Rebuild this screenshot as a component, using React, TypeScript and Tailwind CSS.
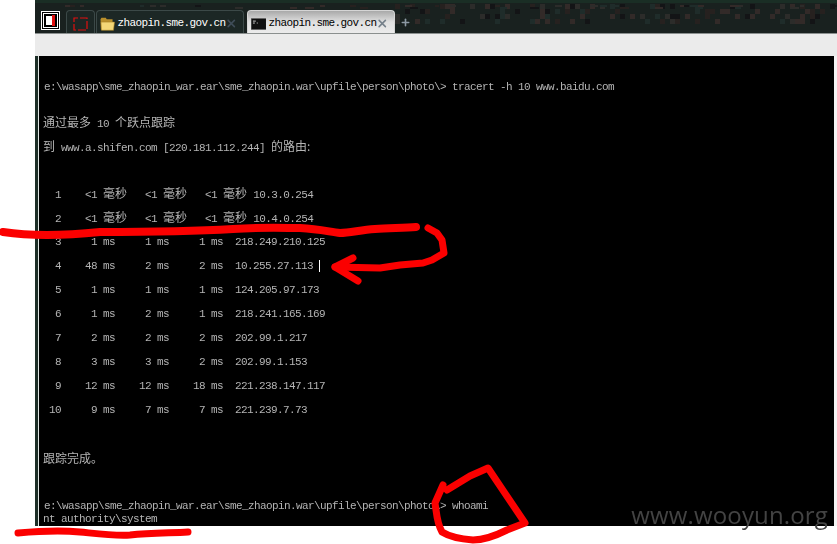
import React from 'react';
import { X, Plus } from 'lucide-react';

const mono = "font-['Liberation_Mono','Noto_Sans_CJK_SC',monospace]";

// speckles in the title bar wallpaper
const speckles = (() => {
  const out: { x: number; y: number; w: number; h: number; c: string }[] = [];
  let seed = 7;
  const rnd = () => {
    seed = (seed * 16807) % 2147483647;
    return seed / 2147483647;
  };
  const colors = ['#26211f', '#2c2c2a', '#131416', '#322a28', '#1f2c2a'];
  for (let i = 0; i < 120; i++) {
    const x = 395 + Math.floor(rnd() * 88) * 5;
    const y = 4 + Math.floor(rnd() * 4) * 5;
    out.push({ x, y, w: 5, h: 5, c: colors[Math.floor(rnd() * 5)] });
  }
  for (let i = 0; i < 40; i++) {
    const x = 40 + Math.floor(rnd() * 160) * 5;
    out.push({ x, y: 5 + Math.floor(rnd() * 2) * 2, w: 4 + Math.floor(rnd() * 6), h: 2, c: colors[Math.floor(rnd() * 5)] });
  }
  return out;
})();

const Zh: React.FC<{ children: React.ReactNode }> = ({ children }) => (
  <span className="text-[12px] tracking-normal font-['Noto_Sans_CJK_SC',sans-serif]">{children}</span>
);

const ms = <Zh>毫秒</Zh>;

const zhHops = [
  ['  1', '10.3.0.254'],
  ['  2', '10.4.0.254'],
];

const hops = [
  '  3     1 ms     1 ms     1 ms  218.249.210.125',
  '  4    48 ms     2 ms     2 ms  10.255.27.113 ',
  '  5     1 ms     1 ms     1 ms  124.205.97.173',
  '  6     1 ms     2 ms     1 ms  218.241.165.169',
  '  7     2 ms     2 ms     2 ms  202.99.1.217',
  '  8     3 ms     3 ms     2 ms  202.99.1.153',
  '  9    12 ms    12 ms    18 ms  221.238.147.117',
  ' 10     9 ms     7 ms     7 ms  221.239.7.73',
];

const Row: React.FC<{ className?: string; children?: React.ReactNode }> = ({ className = '', children }) => (
  <div className={`h-[24px] leading-[24px] ${className}`}>{children}</div>
);

const Tab: React.FC<{ active?: boolean; icon: React.ReactNode; className?: string }> = ({ active, icon, className = '' }) => (
  <div
    className={`h-[23px] w-[148px] rounded-t-[4px] border border-b-0 flex items-center pt-[3px] pl-[3px] pr-[5px] ${
      active
        ? 'bg-gradient-to-b from-[#a9a9a9] via-[#e0e0e0] to-[#ebebeb] border-[#d5d5d5] text-black'
        : 'bg-[#1c2725] border-[#3c4948] text-white'
    } ${className}`}
  >
    {icon}
    <span className={`ml-[2px] text-[11px] tracking-[-0.6px] leading-none ${mono}`}>zhaopin.sme.gov.cn</span>
    <X size={13} strokeWidth={3} className={`ml-auto ${active ? 'text-[#75808a]' : 'text-[#3f4c58]'}`} />
  </div>
);

const App: React.FC = () => {
  return (
    <div className="relative w-[837px] h-[544px] overflow-hidden bg-white">
      <div className="ml-[35px] w-[802px] h-[526px] flex flex-col">
        {/* Tab strip */}
        <div className="relative shrink-0 h-[34px] bg-[#19211f] border-t-[3px] border-[#1a2e25] border-b border-b-[#8a8f8e]">
          <svg className="absolute left-[-35px] top-[-3px]" width="837" height="33">
            {speckles.map((s, i) => (
              <rect key={i} x={s.x} y={s.y} width={s.w} height={s.h} fill={s.c} />
            ))}
          </svg>
          <div className="relative h-full flex items-end pl-[6px]">
            <svg className="mb-[3px] mr-[6px]" width="19" height="19" viewBox="0 0 19 19">
              <rect x="0.5" y="0.5" width="18" height="18" fill="#000" stroke="#fff" />
              <rect x="2.5" y="2.5" width="14" height="14" fill="#000" stroke="#fff" />
              <rect x="5" y="5" width="6" height="9" fill="#fff" />
              <rect x="11" y="4" width="3" height="11" fill="#e01010" />
            </svg>
            <div className="h-[23px] w-[29px] mr-[1px] rounded-t-[4px] border border-b-0 border-[#3c4948] bg-[#1c2725] flex items-center justify-center pt-[3px]">
              <svg width="15" height="14" viewBox="0 0 15 14">
                <rect x="1" y="1" width="13" height="12" fill="none" stroke="#e01010" strokeWidth="1.2" strokeDasharray="8 2" strokeDashoffset="4" />
              </svg>
            </div>
            <Tab
              className="mr-[3px]"
              icon={
                <svg width="16" height="14" viewBox="0 0 16 14">
                  <path d="M0.5 2 L1.5 0.5 H6 L7 2 H13 V13 H1 Z" fill="#b98f2c" />
                  <path d="M1 5 H15 L14 13.5 H1.5 Z" fill="#f3d677" stroke="#a57f22" strokeWidth="0.6" />
                </svg>
              }
            />
            <Tab
              active
              icon={
                <svg width="16" height="12" viewBox="0 0 16 12">
                  <rect width="16" height="12" fill="#101010" stroke="#7d7d7d" />
                  <path d="M2 3 H5 M2 5 H4 M6 5 H7" stroke="#cfcfcf" />
                </svg>
              }
            />
            <Plus size={11} strokeWidth={3.5} className="ml-[5px] mb-[5px] text-[#8d99a3]" />
          </div>
        </div>

        {/* Toolbar area */}
        <div className="shrink-0 h-[22px] bg-[#ebebeb]" />

        {/* Console */}
        <div className="flex-1 min-h-0 flex border-l-[3px] border-[#1d2e27]">
          <div className="w-[1px] bg-[#dfe5e2]" />
          <div className="flex-1 bg-black">
            <div className={`will-change-transform pt-[19px] pl-[4px] text-[11px] tracking-[-0.6px] text-[#b4b4b4] whitespace-pre ${mono}`}>
              <Row className="pl-[1px]">{'e:\\wasapp\\sme_zhaopin_war.ear\\sme_zhaopin.war\\upfile\\person\\photo\\> tracert -h 10 www.baidu.com'}</Row>
              <Row className="mt-[11px]"><Zh>通过最多</Zh>{' 10 '}<Zh>个跃点跟踪</Zh></Row>
              <Row><Zh>到</Zh>{' www.a.shifen.com [220.181.112.244] '}<Zh>的路由:</Zh></Row>
              <Row />
              {zhHops.map(([n, ip]) => (
                <Row key={n} className="!leading-[22px]">{n}{'    <1 '}{ms}{'   <1 '}{ms}{'   <1 '}{ms}{' '}{ip}</Row>
              ))}
              {hops.map((line) => (
                <Row key={line} className="flex items-center">
                  <span>{line}</span>
                  {line.includes('10.255.27.113') && <span className="w-[1px] h-[12px] bg-white" />}
                </Row>
              ))}
              <Row className="mt-[24px]"><Zh>跟踪完成。</Zh></Row>
              <div className="mt-[30px] h-[13px] leading-[13px] pl-[1px]">{'e:\\wasapp\\sme_zhaopin_war.ear\\sme_zhaopin.war\\upfile\\person\\photo\\> whoami'}</div>
              <div className="h-[13px] leading-[13px]">nt authority\system</div>
            </div>
          </div>
          <div className="w-[3px] bg-[#f4f4f4]" />
        </div>
      </div>

      {/* Watermark */}
      <span className="absolute right-[9px] top-[500px] text-[24px] tracking-[0.15px] leading-[30px] text-[#434343] font-['Open_Sans',sans-serif]">www.wooyun.org</span>

      {/* Red marker annotations */}
      <svg className="absolute inset-0" width="837" height="544" fill="none" stroke="#fb0000" strokeLinecap="round" strokeLinejoin="round">
        <path strokeWidth="8" d="M3 232 C30 236 60 236 100 232 C150 232 200 231 233 229 C260 227 285 228 300 228 C320 229 330 232 340 233 C350 233 360 230 375 229 C390 228 405 228 416 227" />
        <path strokeWidth="7" d="M428 228 L437 233 L442 240 L444 253 L432 260 L423 263 L400 265 L380 268 L335 267" />
        <path strokeWidth="7" d="M353 258 L335 267 L358 281" />
        <path strokeWidth="7" d="M18 533 C40 531 60 530 80 532 C100 534 115 536 130 535 C150 533 170 533 188 532" />
        <path strokeWidth="7" d="M447 490 L470 476 L488 468 L525 523 L507 530 C495 536 485 540 473 540 C460 539 450 537 442 532 C438 525 437 518 436 510 L435 503 L443 485" />
      </svg>
    </div>
  );
};

export default App;
